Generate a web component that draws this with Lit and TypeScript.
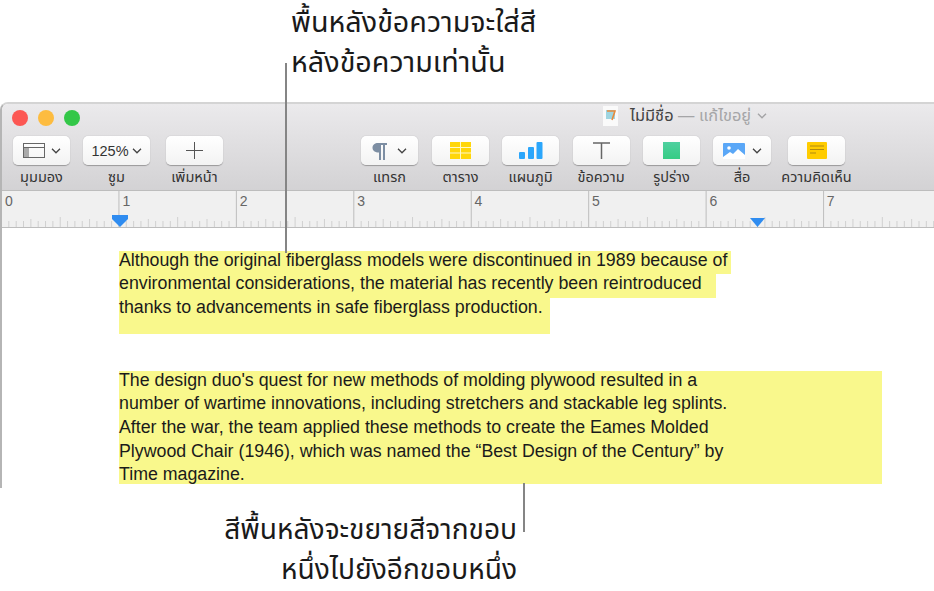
import { LitElement, html, css, svg } from "lit";
import { customElement } from "lit/decorators.js";

const chev = html`<svg class="chev" width="10" height="6" viewBox="0 0 10 6"><path d="M1 .8 5 4.8 9 .8" fill="none" stroke="#444" stroke-width="1.3"/></svg>`;

const ticks = svg`${Array.from({ length: 130 }, (_, i) => {
  const x = -0.5 + i * 7.34;
  const major = i % 16 === 0;
  const mid = i % 8 === 0;
  const q = i % 4 === 0;
  return svg`<line x1=${x} x2=${x} y1=${major ? 0 : mid ? 26 : q ? 28 : 30} y2="36" stroke=${major ? "#bdbdbd" : "#d0d0d0"} />`;
})}`;

@customElement("app-root")
export class AppRoot extends LitElement {
  static styles = css`
    :host { display: block; position: relative; width: 934px; height: 591px; overflow: hidden; background: #fff; font-family: "Liberation Sans", "Noto Sans", "Noto Sans Thai", sans-serif; color: #1d1d1d; }
    .cap { color: #1a1a1a; white-space: nowrap; }
    .cap div { height: 40px; line-height: 40px; }
    .cap.top { font-size: 28.7px; height: 102px; box-sizing: border-box; padding: 2px 0 0 291px; }
    .cap.bottom { font-size: 28.1px; padding: 22px 417px 0 0; text-align: right; }
    .win { height: 386px; box-sizing: border-box; border: 1px solid #c4c4c4; border-width: 2px 0 0 2px; border-left-color: #b5b5b5; border-top-color: #d4d4d4; border-top-left-radius: 8px; overflow: hidden; }
    .bar { height: 87px; box-sizing: border-box; background: linear-gradient(#ebeaec, #d3d2d4); border-bottom: 1px solid #bdbdbd; display: flex; flex-direction: column; }
    .titlerow { height: 32px; display: flex; position: relative; }
    .lights { display: flex; gap: 10px; padding: 6px 0 0 10px; }
    .lights i { width: 16px; height: 16px; border-radius: 50%; }
    .title { position: absolute; left: 601px; top: 1px; height: 22px; display: flex; align-items: center; font-size: 16.4px; color: #444; gap: 12px; white-space: nowrap; }
    .title .dim { color: #a5a5a7; }
    .title .tchev { margin-left: 6px; vertical-align: 2px; }
    .tools { display: flex; position: relative; height: 54px; }
    .tool { position: absolute; top: 0; display: flex; flex-direction: column; align-items: center; }
    .btn { height: 29px; background: linear-gradient(#fff, #f3f3f3); border-radius: 5px; box-shadow: 0 .5px 1px rgba(0,0,0,.3); display: flex; align-items: center; justify-content: center; gap: 6px; box-sizing: border-box; font-size: 14.5px; color: #333; }
    .lbl { font-size: 14.5px; line-height: 18px; margin-top: 3px; color: #333; white-space: nowrap; }
    .ruler { height: 37px; background: #f0f0f0; border-bottom: 1px solid #bdbdbd; position: relative; box-sizing: border-box; }
    .ruler svg.t { position: absolute; left: 0; top: 0; }
    .num { position: absolute; top: 2px; font-size: 14px; color: #666; }
    .mark { position: absolute; }
    .doc { padding: 23px 0 0 117px; font-size: 17.78px; color: #1b1b1b; }
    .p1 span { display: block; width: fit-content; box-sizing: border-box; background: #f9f88c; white-space: nowrap; height: 23.4px; line-height: 19px; }
    .p1 .l1 { padding-right: 4px; }
    .p1 .l2 { padding-right: 14px; }
    .p1 .l3 { padding-right: 7px; height: 36px; }
    .p2 { margin-top: 37px; width: 763px; height: 113px; background: #f9f88c; white-space: nowrap; }
    .p2 div { height: 23.6px; line-height: 19px; }
    .lead { position: absolute; width: 2px; background: #858585; }
    .lead.a { left: 285px; top: 63px; height: 190px; }
    .lead.b { left: 523px; top: 483px; height: 49px; }
  `;

  render() {
    return html`
      <div class="cap top"><div>พื้นหลังข้อความจะใส่สี</div><div>หลังข้อความเท่านั้น</div></div>
      <div class="win">
        <div class="bar">
          <div class="titlerow">
            <div class="lights">
              <i style="background:#fc5753"></i><i style="background:#fdbc40"></i><i style="background:#33c748"></i>
            </div>
            <div class="title">
              <svg width="15" height="20" viewBox="0 0 15 20"><rect width="15" height="20" fill="#fafafa"/><rect x="3" y="4" width="9" height="9" fill="#9fd5e0"/><path d="M4 5h8l-3 9" fill="none" stroke="#e88a3c" stroke-width="1.6"/></svg>
              <span>ไม่มีชื่อ <span class="dim">— แก้ไขอยู่</span><svg class="tchev" width="10" height="6" viewBox="0 0 10 6"><path d="M1 .8 5 4.8 9 .8" fill="none" stroke="#a5a5a7" stroke-width="1.4"/></svg></span>
            </div>
          </div>
          <div class="tools">
            <div class="tool" style="left:11px;width:57px">
              <div class="btn" style="width:57px">
                <svg width="22" height="15" viewBox="0 0 22 15"><rect x=".5" y=".5" width="21" height="14" fill="none" stroke="#666"/><rect x="1" y="5" width="5" height="9" fill="#aaa"/><path d="M1 4.500h20" stroke="#666"/></svg>${chev}
              </div>
              <div class="lbl">มุมมอง</div>
            </div>
            <div class="tool" style="left:81px;width:67px">
              <div class="btn" style="width:67px;gap:3px">125%${chev}</div>
              <div class="lbl">ซูม</div>
            </div>
            <div class="tool" style="left:164px;width:57px">
              <div class="btn" style="width:57px"><svg width="17" height="17" viewBox="0 0 17 17"><path d="M8.500 0v17M0 8.500h17" stroke="#555"/></svg></div>
              <div class="lbl">เพิ่มหน้า</div>
            </div>
            <div class="tool" style="left:359px;width:57px">
              <div class="btn" style="width:57px;gap:10px">
                <svg width="15" height="18" viewBox="0 0 15 18"><path d="M6 1h9v2h-2v15h-2V3H9v15H7V10.500C3 10.500 .5 8.500.5 5.700S3 1 6 1z" fill="#7d8ea3"/></svg>${chev}
              </div>
              <div class="lbl">แทรก</div>
            </div>
            <div class="tool" style="left:430px;width:57px">
              <div class="btn" style="width:57px"><svg width="21" height="17" viewBox="0 0 21 17"><rect width="21" height="17" fill="#ffd60a"/><path d="M10.500 0v17M0 5.500h21M0 11h21" stroke="#fff8c8"/></svg></div>
              <div class="lbl">ตาราง</div>
            </div>
            <div class="tool" style="left:500px;width:57px">
              <div class="btn" style="width:57px"><svg width="24" height="17" viewBox="0 0 24 17"><rect y="10" width="6" height="7" rx="1" fill="#2ba6fb"/><rect x="9" y="5" width="6" height="12" rx="1" fill="#2ba6fb"/><rect x="17.500" width="6" height="17" rx="1" fill="#2ba6fb"/></svg></div>
              <div class="lbl">แผนภูมิ</div>
            </div>
            <div class="tool" style="left:570.500px;width:57px">
              <div class="btn" style="width:57px"><svg width="17" height="17" viewBox="0 0 17 17"><path d="M0 1h17M8.500 1v16" stroke="#666" stroke-width="1.500"/></svg></div>
              <div class="lbl">ข้อความ</div>
            </div>
            <div class="tool" style="left:641px;width:57px">
              <div class="btn" style="width:57px"><svg width="17" height="17"><defs><linearGradient id="g" x1="0" y1="0" x2="0" y2="1"><stop offset="0" stop-color="#4fd0a0"/><stop offset="1" stop-color="#36cc84"/></linearGradient></defs><rect width="17" height="17" fill="url(#g)"/></svg></div>
              <div class="lbl">รูปร่าง</div>
            </div>
            <div class="tool" style="left:711px;width:58px">
              <div class="btn" style="width:58px;gap:7px">
                <svg width="22" height="16" viewBox="0 0 22 16"><rect width="22" height="16" rx="1" fill="#5aa7f7"/><circle cx="6" cy="5" r="1.800" fill="#fff"/><path d="M0 14 7 9l3 2 5-5 7 6v4H0z" fill="#fff"/></svg>${chev}
              </div>
              <div class="lbl">สื่อ</div>
            </div>
            <div class="tool" style="left:786px;width:57px">
              <div class="btn" style="width:57px"><svg width="20" height="17" viewBox="0 0 20 17"><rect width="20" height="17" rx="1" fill="#ffcc00"/><path d="M3 4h14M3 7.500h14M3 11h6" stroke="#b08a10"/></svg></div>
              <div class="lbl">ความคิดเห็น</div>
            </div>
          </div>
        </div>
        <div class="ruler">
          <svg class="t" width="934" height="37">${ticks}</svg>
          ${[0,1,2,3,4,5,6,7].map((n) => html`<span class="num" style="left:${3 + n * 117.4}px">${n}</span>`)}
          <svg class="mark" style="left:110px;top:24px" width="16" height="12" viewBox="0 0 16 12"><path d="M0 0h16v4l-8 8-8-8z" fill="#2f8cf0"/></svg>
          <svg class="mark" style="left:748px;top:27px" width="15" height="9" viewBox="0 0 15 9"><path d="M0 0h15l-7.500 9z" fill="#2f8cf0"/></svg>
        </div>
        <div class="doc">
          <div class="p1">
            <span class="l1">Although the original fiberglass models were discontinued in 1989 because of</span>
            <span class="l2">environmental considerations, the material has recently been reintroduced</span>
            <span class="l3">thanks to advancements in safe fiberglass production.</span>
          </div>
          <div class="p2">
            <div>The design duo's quest for new methods of molding plywood resulted in a</div>
            <div>number of wartime innovations, including stretchers and stackable leg splints.</div>
            <div>After the war, the team applied these methods to create the Eames Molded</div>
            <div>Plywood Chair (1946), which was named the “Best Design of the Century” by</div>
            <div>Time magazine.</div>
          </div>
        </div>
      </div>
      <div class="cap bottom"><div>สีพื้นหลังจะขยายสีจากขอบ</div><div>หนึ่งไปยังอีกขอบหนึ่ง</div></div>
      <div class="lead a"></div>
      <div class="lead b"></div>
    `;
  }
}
